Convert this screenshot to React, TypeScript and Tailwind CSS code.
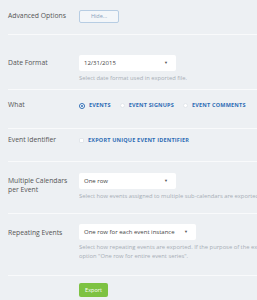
const font = { fontFamily: '"Open Sans", "Liberation Sans", sans-serif' };

function Separator() {
  return <div className="ml-[8px] h-px bg-[#f9fafb]" />;
}

function Select({ value, width }: { value: string; width: string }) {
  return (
    <div
      className={`flex h-[16px] items-center justify-between rounded-[2px] bg-white pl-[5px] pr-[8px] text-[6px] text-[#444] ${width}`}
    >
      <span>{value}</span>
      <span className="text-[4px] text-[#555]">▼</span>
    </div>
  );
}

function Radio({ label, checked }: { label: string; checked?: boolean }) {
  return (
    <div className="flex items-center gap-[4px]">
      {checked ? (
        <span className="flex h-[6px] w-[6px] items-center justify-center rounded-full border-[1.5px] border-[#2f6db5] bg-white">
          <span className="h-[2px] w-[2px] rounded-full bg-[#2f6db5]" />
        </span>
      ) : (
        <span className="h-[5px] w-[5px] rounded-full border border-[#e3e7eb] bg-white" />
      )}
      <span className="text-[5.5px] font-bold tracking-[0.2px] text-[#2f6db5]">{label}</span>
    </div>
  );
}

const label = "w-[71px] shrink-0 text-[6.8px]";
const help = "mt-[3px] text-[5.8px] text-[#a6adb5]";

export default function App() {
  return (
    <div className="h-[300px] w-[257px] overflow-hidden bg-[#edf0f3] text-[#555]" style={font}>
      {/* Advanced options */}
      <div className="flex h-[34px] items-center pl-[8px] pb-[2px]">
        <div className={label}>Advanced Options</div>
        <div className="flex h-[13px] w-[40px] items-center justify-center rounded-[2px] border border-[#b7cde3] bg-[#f3f6f9] text-[5.5px] text-[#8aa2bd]">
          Hide...
        </div>
      </div>
      <Separator />

      {/* Date format */}
      <div className="flex h-[54px] pl-[8px] pt-[20px]">
        <div className={`${label} pt-[3px]`}>Date Format</div>
        <div className="whitespace-nowrap">
          <Select value="12/31/2015" width="w-[97px]" />
          <div className={help}>Select date format used in exported file.</div>
        </div>
      </div>
      <Separator />

      {/* What */}
      <div className="flex h-[38px] items-center pl-[8px] pb-[7px]">
        <div className={label}>What</div>
        <div className="flex items-center gap-[9px] whitespace-nowrap">
          <Radio label="EVENTS" checked />
          <Radio label="EVENT SIGNUPS" />
          <Radio label="EVENT COMMENTS" />
        </div>
      </div>
      <Separator />

      {/* Event identifier */}
      <div className="flex h-[32px] items-center pl-[8px] pb-[9px]">
        <div className={label}>Event Identifier</div>
        <div className="flex items-center gap-[4px] whitespace-nowrap">
          <span className="h-[5px] w-[5px] rounded-[1px] border border-[#e3e7eb] bg-white" />
          <span className="text-[5.5px] font-bold tracking-[0.2px] text-[#2f6db5]">EXPORT UNIQUE EVENT IDENTIFIER</span>
        </div>
      </div>
      <Separator />

      {/* Multiple calendars */}
      <div className="flex h-[51px] pl-[8px] pt-[11px]">
        <div className={`${label} pt-[3px] leading-[9px]`}>
          Multiple Calendars
          <br />
          per Event
        </div>
        <div className="min-w-0 overflow-hidden whitespace-nowrap">
          <Select value="One row" width="w-[97px]" />
          <div className={help}>Select how events assigned to multiple sub-calendars are exported.</div>
        </div>
      </div>
      <Separator />

      {/* Repeating events */}
      <div className="flex h-[61px] pl-[8px] pt-[10px]">
        <div className={`${label} pt-[4px]`}>Repeating Events</div>
        <div className="min-w-0 overflow-hidden whitespace-nowrap">
          <Select value="One row for each event instance" width="w-[117px]" />
          <div className={`${help} leading-[9px]`}>
            Select how repeating events are exported. If the purpose of the export is
            <br />
            option "One row for entire event series".
          </div>
        </div>
      </div>
      <Separator />

      {/* Export */}
      <div className="pl-[79px] pt-[7px]">
        <div className="flex h-[14px] w-[29px] items-center justify-center rounded-[2px] bg-[#7dc242] text-[5.5px] text-white">
          Export
        </div>
      </div>
    </div>
  );
}
